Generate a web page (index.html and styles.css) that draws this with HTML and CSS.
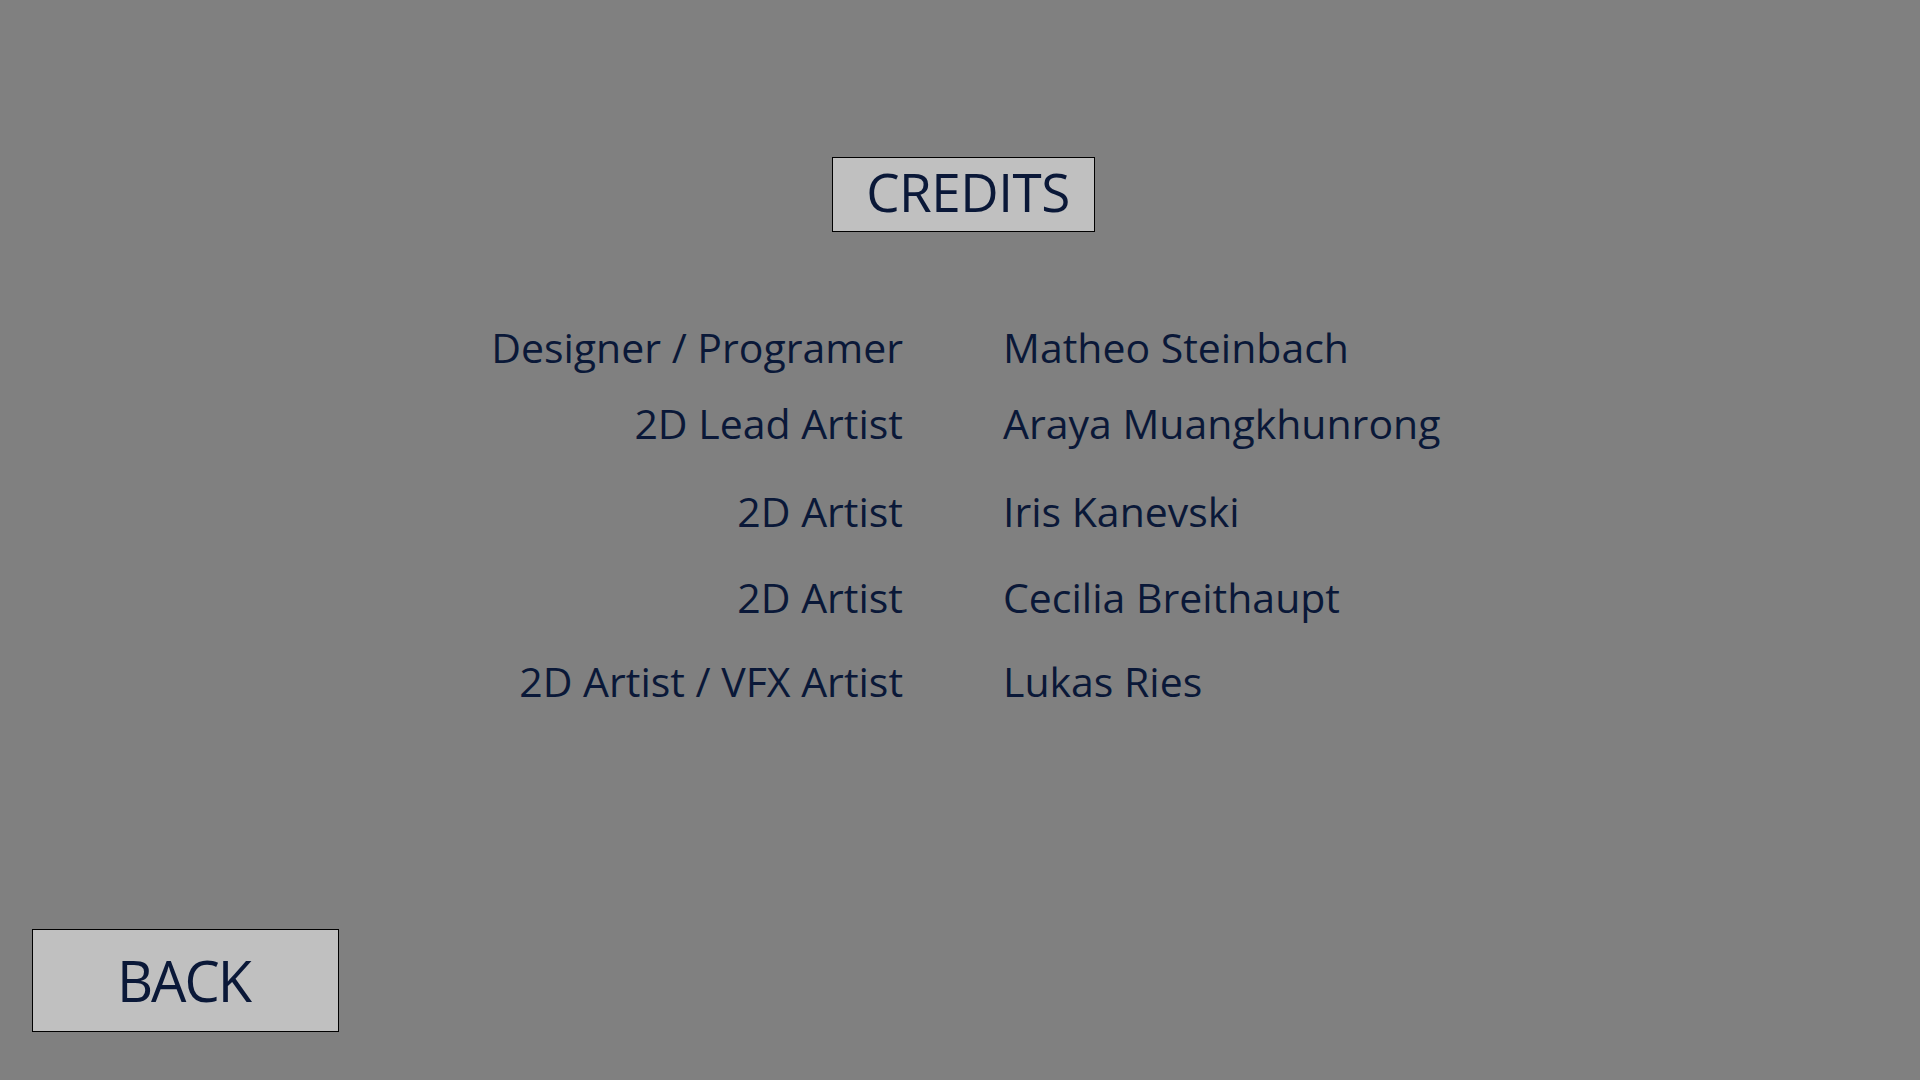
FILE: index.html
```html
<!DOCTYPE html>
<html lang="en">
<head>
<meta charset="utf-8">
<title>Credits</title>
<link rel="stylesheet" href="styles.css">
</head>
<body>
<div class="screen">
  <header class="title-wrap">
    <h1 class="title-box">CREDITS</h1>
  </header>
  <section class="credits">
    <div class="role">Designer / Programer</div><div class="name">Matheo Steinbach</div>
    <div class="role">2D Lead Artist</div><div class="name">Araya Muangkhunrong</div>
    <div class="role">2D Artist</div><div class="name">Iris Kanevski</div>
    <div class="role">2D Artist</div><div class="name">Cecilia Breithaupt</div>
    <div class="role">2D Artist / VFX Artist</div><div class="name">Lukas Ries</div>
  </section>
  <footer class="footer">
    <button class="back-btn" type="button">BACK</button>
  </footer>
</div>
</body>
</html>
```
FILE: styles.css
```css
html, body {
  margin: 0;
  padding: 0;
  background: #808080;
}
body {
  font-family: "Open Sans", "Noto Sans", sans-serif;
  color: #0a1838;
}
.screen {
  width: 1920px;
  height: 1080px;
  display: flex;
  flex-direction: column;
}
.title-wrap {
  display: flex;
  justify-content: center;
  padding-top: 157px;
  padding-left: 7px;
}
.title-box {
  margin: 0;
  box-sizing: border-box;
  width: 263px;
  height: 75px;
  border: 1px solid #000;
  background: #c0c0c0;
  font-size: 53px;
  font-weight: 400;
  line-height: 67px;
  padding-left: 9px;
  text-align: center;
  letter-spacing: -0.5px;
}
.credits {
  margin-top: 87px;
  display: grid;
  grid-template-columns: 1fr 1fr;
  grid-template-rows: 76px 88px 86px 84px 86px;
  column-gap: 100px;
  padding-right: 14px;
  font-size: 41px;
  line-height: 56px;
  letter-spacing: 0;
}
.role {
  text-align: right;
  align-self: start;
}
.name {
  text-align: left;
  align-self: start;
}
.footer {
  margin-top: auto;
  padding: 0 0 48px 32px;
}
.back-btn {
  display: block;
  box-sizing: border-box;
  width: 307px;
  height: 103px;
  border: 1px solid #000;
  background: #c0c0c0;
  color: #0a1838;
  font-family: "Open Sans", "Noto Sans", sans-serif;
  font-size: 56px;
  line-height: 101px;
  padding: 0 4px 0 0;
  letter-spacing: -2px;
  text-align: center;
  cursor: pointer;
}
```
